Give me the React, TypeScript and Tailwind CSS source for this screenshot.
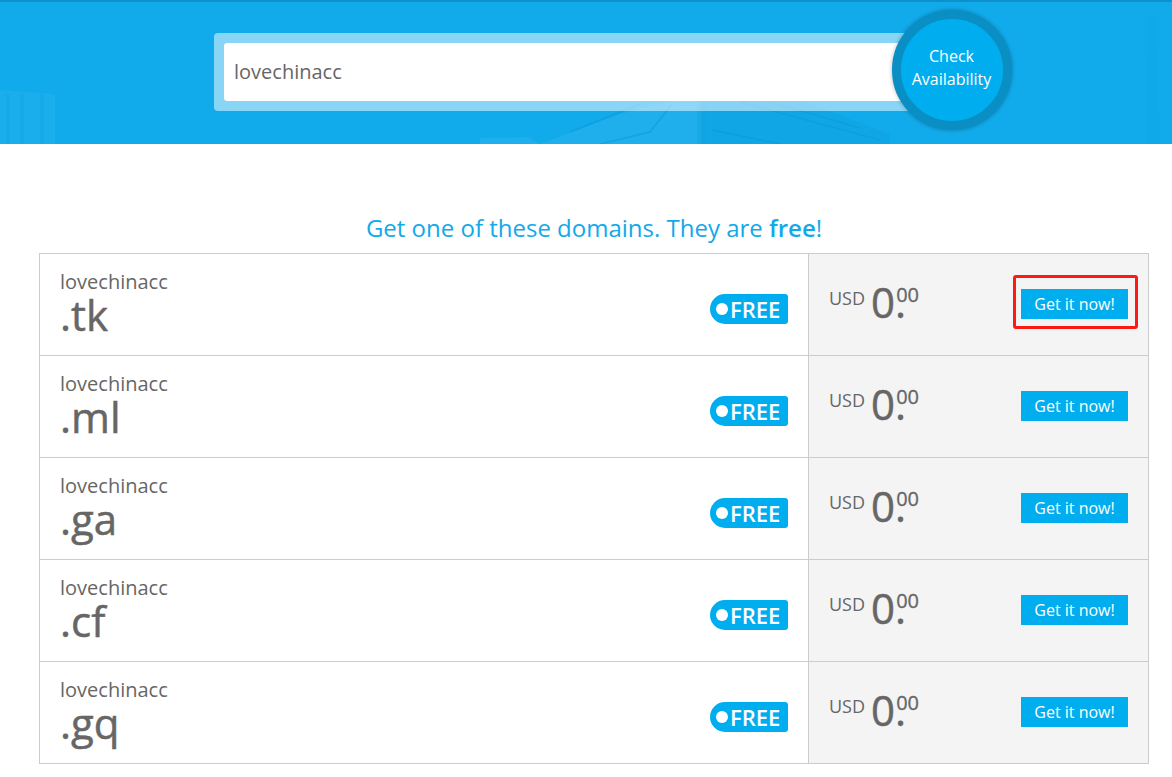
import React from "react";

const tlds = [".tk", ".ml", ".ga", ".cf", ".gq"];

function HeroArt() {
  return (
    <svg className="absolute inset-0 h-full w-full" viewBox="0 0 1172 142" preserveAspectRatio="none" aria-hidden="true">
      <path d="M0 88 L55 92 L55 142 L0 142 Z" fill="#2bb3ee" opacity="0.4" />
      <g stroke="#0f9fdc" strokeWidth="4" opacity="0.25">
        <path d="M8 92 V142 M22 92 V142 M42 92 V142" />
      </g>
      <path d="M480 142 L480 136 L528 135 L540 142 Z" fill="#2bb3ee" opacity="0.5" />
      <path d="M540 142 L620 112 L675 98 L702 98 L702 142 Z" fill="#2bb3ee" opacity="0.5" />
      <path d="M700 98 L800 98 L890 132 L890 142 L700 142 Z" fill="#0f9fdc" opacity="0.35" />
      <g stroke="#0d94cf" strokeWidth="1.5" opacity="0.45" fill="none">
        <path d="M570 130 L640 102 M600 142 L650 130 L672 102" />
        <path d="M712 128 L780 142 M740 100 L880 138 M770 100 L860 126" />
      </g>
      <path d="M702 98 V142" stroke="#0f9fdc" strokeWidth="10" opacity="0.25" />
      <path d="M1145 142 L1148 14 L1156 14 L1160 142 Z" fill="#0f9fdc" opacity="0.18" />
    </svg>
  );
}

function Row({ tld, highlighted }: { tld: string; highlighted: boolean }) {
  return (
    <div className="flex h-[102px] border-b border-[#cccccc] text-[#666666]">
      <div className="flex w-[769px] items-start justify-between border-r border-[#cccccc] pl-5 pr-5">
        <div className="pt-[14px]">
          <div className="text-[20px] leading-[27px]">lovechinacc</div>
          <div className="-mt-[2px] text-[42px] leading-[43px] [-webkit-text-stroke:0.5px_#666666]">{tld}</div>
        </div>
        <div className="mt-10 flex h-[30px] w-[78px] items-center rounded-l-[15px] rounded-r-[3px] bg-[#00aeef] pl-[6px] text-white">
          <span className="mr-[2px] h-[12px] w-[12px] rounded-full bg-white" />
          <span className="text-[22px] font-semibold leading-[30px]">FREE</span>
        </div>
      </div>
      <div className="flex flex-1 items-start justify-between bg-[#f4f4f4] pl-5 pr-5">
        <div className="flex items-start pt-[19px]">
          <span className="mt-[14px] text-[18px] leading-[22px]">USD</span>
          <span className="ml-[6px] text-[42px] leading-[58px] [-webkit-text-stroke:0.5px_#666666]">0.</span>
          <span className="-ml-[10px] mt-[8px] text-[20px] leading-[27px] [-webkit-text-stroke:0.3px_#666666]">00</span>
        </div>
        <div className="relative mt-[35px]">
          <button className="block h-[30px] w-[107px] bg-[#00aeef] text-[16px] leading-[30px] text-white">Get it now!</button>
          {highlighted && (
            <div className="absolute -bottom-[10px] -left-2 -right-[10px] -top-[14px] rounded-[3px] border-[3px] border-[#fb1b12]" />
          )}
        </div>
      </div>
    </div>
  );
}

export default function App() {
  return (
    <div className="min-h-[777px] bg-white font-['Open_Sans',sans-serif]">
      <div className="relative h-[144px] border-t-2 border-[#0e90c8] bg-[#11abeb]">
        <HeroArt />
        <div className="relative ml-[214px] w-[690px] pt-[31px]">
          <div className="h-[78px] w-[710px] rounded-[4px] bg-white/50 p-[10px]">
            <div className="flex h-[58px] items-center rounded-[3px] bg-white pl-[10px] text-[20px] text-[#666666]">lovechinacc</div>
          </div>
          <div className="absolute left-[678px] top-[8px] flex h-[120px] w-[120px] items-center justify-center rounded-full border-[9px] border-[#0a8fc4] bg-[#00aeef] pb-[4px] pr-[1px] text-center text-[16px] leading-[23px] text-white shadow-[0_0_4px_rgba(0,0,0,0.3)]">
            <span>Check<br />Availability</span>
          </div>
        </div>
      </div>
      <div className="mx-[39px] w-[1110px]">
        <h2 className="mt-[67px] text-center text-[24px] leading-[33px] text-[#12a9ea]">
          Get one of these domains. They are <b className="font-semibold">free</b>!
        </h2>
        <div className="mt-[9px] border border-b-0 border-[#cccccc]">
          {tlds.map((t, i) => (
            <Row key={t} tld={t} highlighted={i === 0} />
          ))}
        </div>
      </div>
    </div>
  );
}
